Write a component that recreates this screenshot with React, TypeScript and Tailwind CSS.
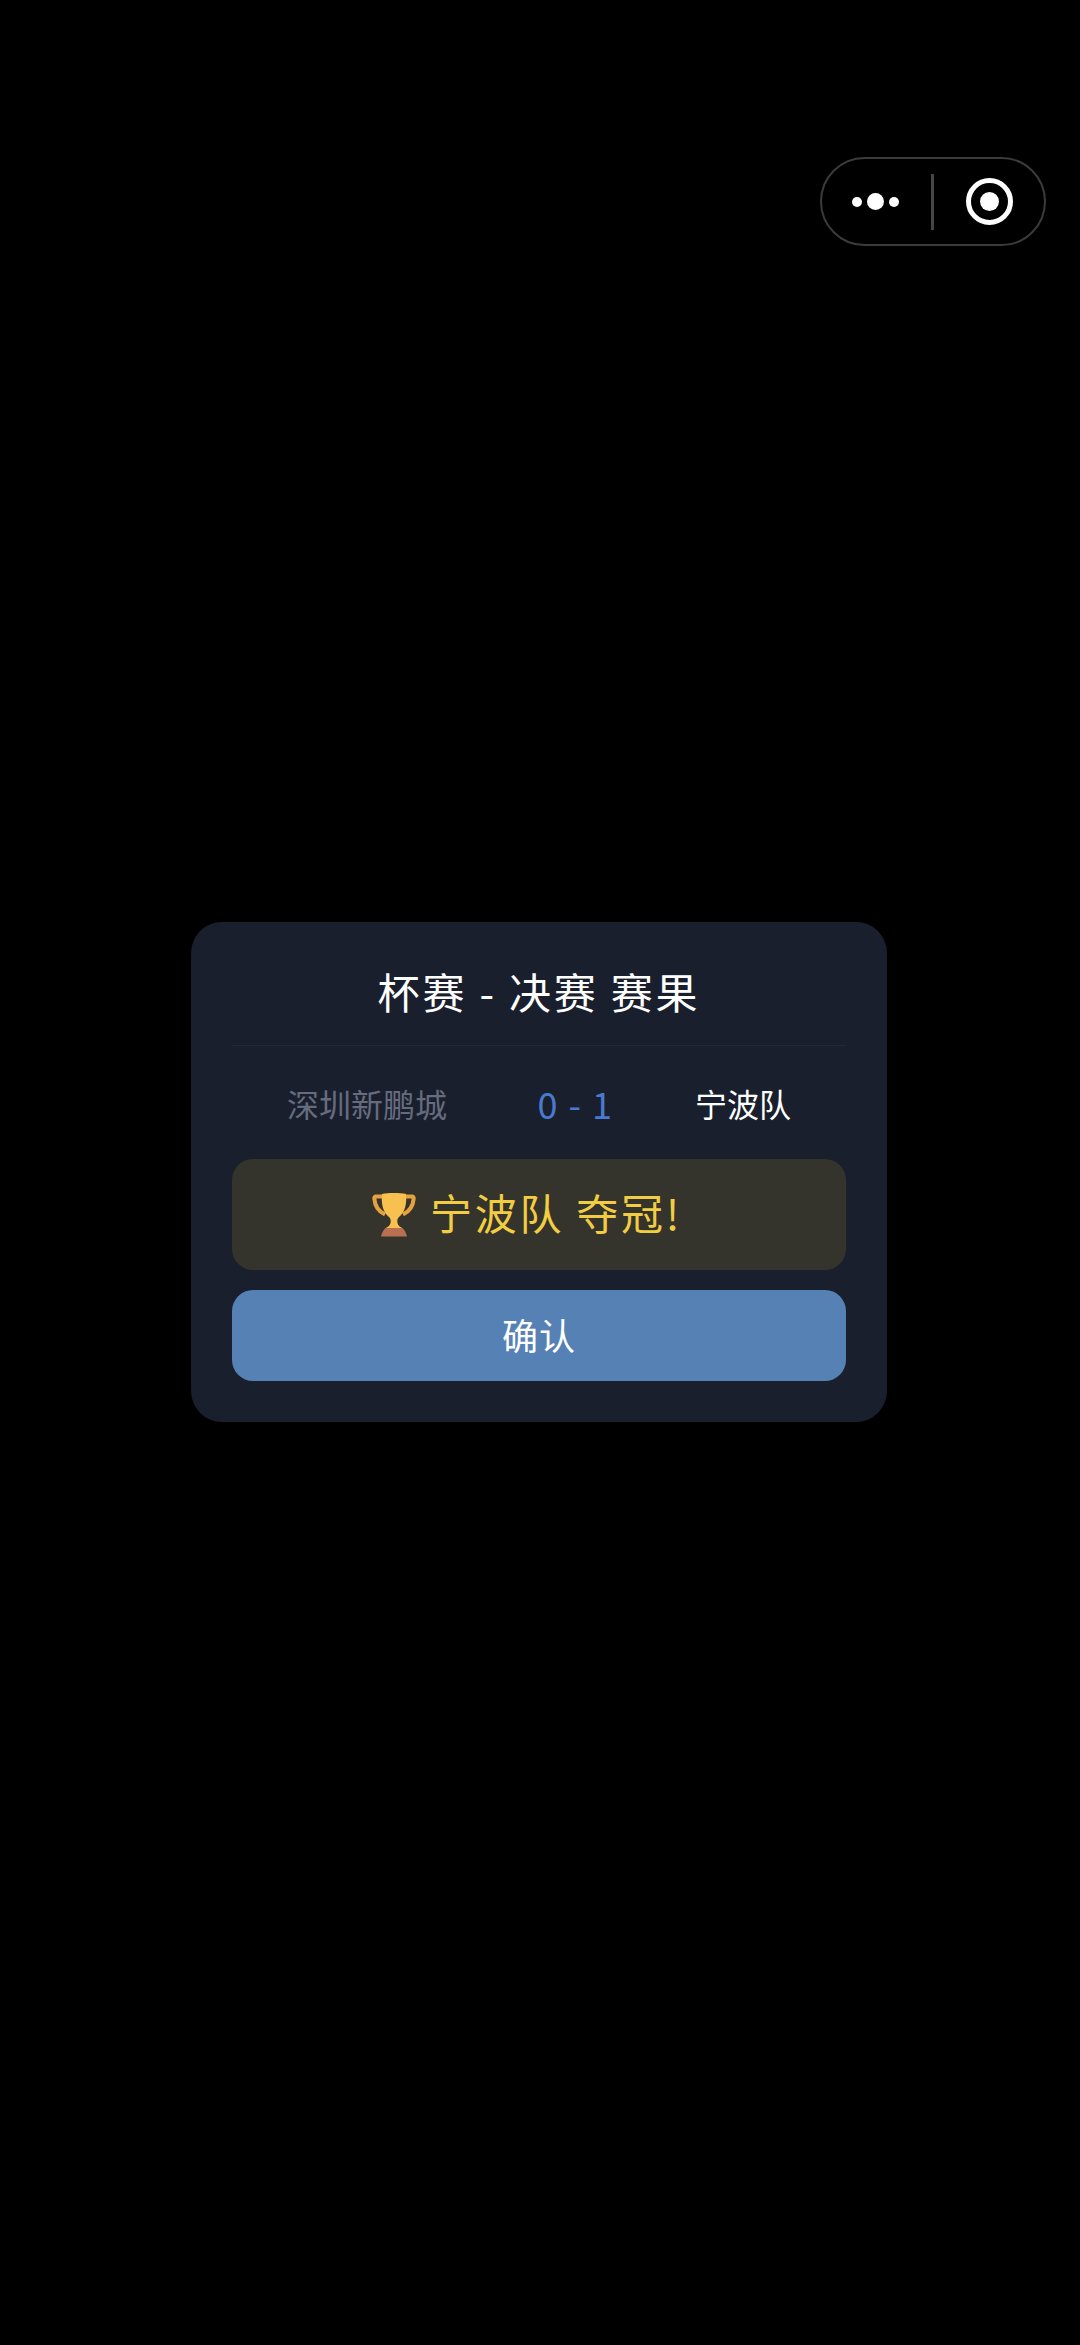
const cjk = "font-['Noto_Sans_CJK_SC','Noto_Sans',sans-serif]";

function Trophy() {
  return (
    <svg width="44" height="45" viewBox="0 0 44 45" fill="none" className="shrink-0">
      <path d="M11 4.500H4C2.800 4.500 2.200 5.200 2.300 6.500C2.800 13 5.500 19 13 22.500" stroke="#e5a23f" strokeWidth="4" />
      <path d="M33 4.500H40C41.200 4.500 41.800 5.200 41.700 6.500C41.200 13 38.500 19 31 22.500" stroke="#e5a23f" strokeWidth="4" />
      <path
        d="M10 2C16 .8 28 .8 34 2C35 12 33 20 27 25C25.300 26.500 25 29 25.500 31C26 33.500 28 35 31 36.500H13C16 35 18 33.500 18.500 31C19 29 18.700 26.500 17 25C11 20 9 12 10 2Z"
        fill="#f8c14f"
      />
      <path d="M14 36H30C32 37 34 40 35 44.500H9C10 40 12 37 14 36Z" fill="#b86f52" />
    </svg>
  );
}

function Capsule() {
  return (
    <div className="flex h-[89px] w-[226px] items-center rounded-full border-[2.5px] border-[#3b3b3b] bg-black">
      <div className="flex w-[109px] items-center justify-end gap-[5px] pr-[32px]">
        <span className="h-[10px] w-[10px] rounded-full bg-white" />
        <span className="h-[17px] w-[17px] rounded-full bg-white" />
        <span className="h-[10px] w-[10px] rounded-full bg-white" />
      </div>
      <div className="h-[56px] w-[3px] bg-[#454545]" />
      <div className="flex flex-1 items-center justify-center pl-[1px]">
        <div className="flex h-[47px] w-[47px] items-center justify-center rounded-full border-[5px] border-white">
          <span className="h-[19px] w-[19px] rounded-full bg-white" />
        </div>
      </div>
    </div>
  );
}

export default function App() {
  return (
    <div className={`flex h-[2345px] w-[1080px] flex-col overflow-hidden bg-black ${cjk}`}>
      <div className="flex justify-end pt-[157px] pr-[34px]">
        <Capsule />
      </div>

      <div className="mt-[676px] ml-[191px] w-[696px] rounded-[31px] bg-[#1a1f2e] px-[41px] pt-[39px] pb-[41px]">
        <h2 className="border-b border-[#232939] pb-[24px] text-center text-[42px] leading-[60px] tracking-[2.8px] text-white">
          杯赛 - 决赛 赛果
        </h2>

        <div className="flex items-center justify-between px-[55px] pt-[35px] pb-[34px] text-[32px] leading-[44px]">
          <span className="text-[#666c7d]">深圳新鹏城</span>
          <span className="ml-[9px] text-[36px] leading-[44px] tracking-[1.5px] text-[#4a7ad0]">0 - 1</span>
          <span className="text-white">宁波队</span>
        </div>

        <div className="flex h-[111px] items-center justify-center gap-[14px] rounded-[21px] bg-[#35342c] pr-[24px]">
          <Trophy />
          <span className="pb-[5px] text-[42px] leading-[60px] tracking-[2.7px] text-[#f2cd42]">宁波队 夺冠!</span>
        </div>

        <button
          type="button"
          className="mt-[20px] flex h-[91px] w-full items-center justify-center rounded-[21px] bg-[#5681b5] pb-[3px] text-[36px] tracking-[1px] text-white"
        >
          确认
        </button>
      </div>
    </div>
  );
}
